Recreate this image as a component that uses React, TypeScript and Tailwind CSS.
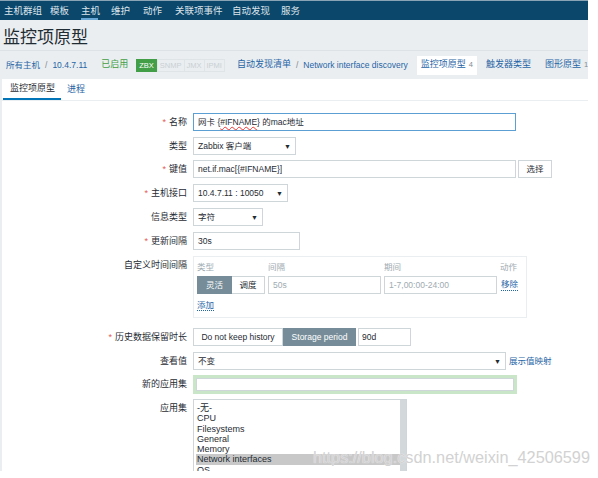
import React from "react";

const F = { fontFamily: '"Liberation Sans", "Noto Sans CJK SC", sans-serif' };

function Arrow() {
  return <span className="text-[7px] text-[#1f2c33] leading-none">▼</span>;
}

function Label({ req, children }: { req?: boolean; children: React.ReactNode }) {
  return (
    <div className="w-[191px] shrink-0 pr-[6px] text-right text-[9px] text-[#1f2c33] leading-[18px] whitespace-nowrap">
      {req && <span className="text-[#e45959] mr-[3px]">*</span>}
      {children}
    </div>
  );
}

export default function App() {
  const nav = ["主机群组", "模板", "主机", "维护", "动作", "关联项事件", "自动发现", "服务"];
  const navX = ["w-[46px]", "w-[31px]", "w-[30px]", "w-[32px]", "w-[32px]", "w-[57px]", "w-[49px]", "w-[30px]"];
  return (
    <div className="w-[598px] h-[478px] bg-white overflow-hidden relative" style={F}>
      <div className="w-[588px] h-[471px] bg-[#ebeef0] overflow-hidden flex flex-col">
        {/* top nav */}
        <div className="h-[20px] bg-[#0b466b] border-t border-[#8aa4b5] flex items-stretch pl-[4px] shrink-0">
          {nav.map((n, i) => (
            <div key={n} className={`${navX[i]} shrink-0 relative text-[9.5px] text-[#dbe4ea] leading-[19px] whitespace-nowrap`}>
              {n}
              {i === 2 && <div className="absolute left-0 w-[17px] bottom-0 h-[2px] bg-[#69a8d6]" />}
            </div>
          ))}
        </div>
        {/* title */}
        <div className="h-[31px] border-b border-[#dde2e6] flex items-center pl-[3px] shrink-0">
          <span className="text-[17px] text-[#1f2c33] leading-none mt-[4px]">监控项原型</span>
        </div>
        {/* breadcrumb */}
        <div className="h-[28px] flex items-center pl-[6px] text-[8.5px] shrink-0 whitespace-nowrap">
          <span className="text-[#1f65a6]">所有主机</span>
          <span className="text-[#7f8c93] mx-[5px]">/</span>
          <span className="text-[#1f65a6]">10.4.7.11</span>
          <span className="text-[#429e47] ml-[14px] text-[9px]">已启用</span>
          <div className="flex ml-[8px] text-[7.5px] leading-[11px]">
            <span className="bg-[#429e47] text-white px-[2px] border border-[#429e47]">ZBX</span>
            <span className="text-[#c8d0d4] border border-[#dfe4e7] px-[2px]">SNMP</span>
            <span className="text-[#c8d0d4] border border-[#dfe4e7] border-l-0 px-[2px]">JMX</span>
            <span className="text-[#c8d0d4] border border-[#dfe4e7] border-l-0 px-[2px]">IPMI</span>
          </div>
          <span className="text-[#1f65a6] ml-[12px] text-[9px]">自动发现清单</span>
          <span className="text-[#7f8c93] mx-[5px]">/</span>
          <span className="text-[#1f65a6]">Network interface discovery</span>
          <div className="ml-[9px] bg-white h-[19px] flex items-center px-[4px]">
            <span className="text-[#1f65a6] text-[9px]">监控项原型</span>
            <span className="text-[#7f8c93] text-[7.5px] ml-[3px]">4</span>
          </div>
          <span className="text-[#1f65a6] ml-[9px] text-[9px]">触发器类型</span>
          <span className="text-[#1f65a6] ml-[14px] text-[9px]">图形原型</span>
          <span className="text-[#7f8c93] text-[7.5px] ml-[3px]">1</span>
        </div>
        {/* tabs */}
        <div className="h-[22px] bg-white flex items-stretch ml-[2px] border-b border-[#ebeef0] shrink-0">
          <div className="w-[58px] ml-[1px] border-b-2 border-[#0275b8] text-[9px] text-[#1f2c33] flex items-center pl-[7px] whitespace-nowrap">监控项原型</div>
          <div className="text-[9px] text-[#1f65a6] flex items-center ml-[6px]">进程</div>
        </div>
        {/* form */}
        <div className="flex-1 bg-white ml-[2px] pt-[12px] flex flex-col text-[8.5px] text-[#1f2c33] whitespace-nowrap">
          {/* 名称 */}
          <div className="flex h-[18px]">
            <Label req>名称</Label>
            <div className="w-[323px] h-[18px] border border-[#5b9fd3] flex items-center px-[4px]">
              网卡 {"{"}<span className="underline decoration-[#e33] decoration-wavy">#IFNAME</span>{"}"} 的mac地址
            </div>
          </div>
          <div className="flex h-[18px] mt-[6px]">
            <Label>类型</Label>
            <div className="w-[103px] h-[18px] border border-[#cfd6da] flex items-center justify-between px-[4px]">
              <span>Zabbix 客户端</span>
              <Arrow />
            </div>
          </div>
          <div className="flex h-[18px] mt-[5px]">
            <Label req>键值</Label>
            <div className="w-[323px] h-[18px] border border-[#cfd6da] flex items-center px-[4px]">net.if.mac[{"{"}#IFNAME{"}"}]</div>
            <div className="ml-[2px] w-[34px] h-[18px] border border-[#cfd6da] flex items-center justify-center text-[8.5px]">选择</div>
          </div>
          <div className="flex h-[18px] mt-[6px]">
            <Label req>主机接口</Label>
            <div className="w-[95px] h-[18px] border border-[#cfd6da] flex items-center justify-between px-[4px]">
              <span>10.4.7.11 : 10050</span>
              <Arrow />
            </div>
          </div>
          <div className="flex h-[18px] mt-[6px]">
            <Label>信息类型</Label>
            <div className="w-[70px] h-[18px] border border-[#cfd6da] flex items-center justify-between px-[4px]">
              <span>字符</span>
              <Arrow />
            </div>
          </div>
          <div className="flex h-[18px] mt-[6px]">
            <Label req>更新间隔</Label>
            <div className="w-[107px] h-[18px] border border-[#cfd6da] flex items-center px-[4px]">30s</div>
          </div>
          {/* custom intervals */}
          <div className="flex mt-[6px]">
            <Label>自定义时间间隔</Label>
            <div className="w-[334px] h-[62px] border border-[#ebeef0] px-[3px] pt-[4px] flex flex-col">
              <div className="flex h-[12px] text-[8.5px] text-[#a0abb1] leading-[12px]">
                <span className="w-[71px]">类型</span>
                <span className="w-[116px]">间隔</span>
                <span className="w-[116px]">期间</span>
                <span>动作</span>
              </div>
              <div className="flex h-[18px] mt-[3px] items-center">
                <div className="flex h-[18px] w-[68px]">
                  <div className="w-[35px] bg-[#768d99] text-white flex items-center justify-center text-[8.5px]">灵活</div>
                  <div className="w-[33px] border border-[#cfd6da] border-l-0 flex items-center justify-center text-[8.5px]">调度</div>
                </div>
                <div className="ml-[3px] w-[113px] h-[18px] border border-[#cfd6da] flex items-center px-[4px] text-[#a0abb1] text-[8.5px]">50s</div>
                <div className="ml-[3px] w-[113px] h-[18px] border border-[#cfd6da] flex items-center px-[4px] text-[#a0abb1] text-[8.5px]">1-7,00:00-24:00</div>
                <span className="ml-[4px] text-[#1f65a6] border-b border-dotted border-[#1f65a6] leading-[11px] text-[8.5px]">移除</span>
              </div>
              <div className="mt-[5px]">
                <span className="text-[#1f65a6] border-b border-dotted border-[#1f65a6] leading-[11px] text-[8.5px]">添加</span>
              </div>
            </div>
          </div>
          <div className="flex h-[18px] mt-[10px]">
            <Label req>历史数据保留时长</Label>
            <div className="flex h-[18px]">
              <div className="w-[90px] border border-[#cfd6da] flex items-center justify-center">Do not keep history</div>
              <div className="w-[73px] bg-[#768d99] text-white flex items-center justify-center">Storage period</div>
            </div>
            <div className="ml-[2px] w-[53px] h-[18px] border border-[#cfd6da] flex items-center px-[3px]">90d</div>
          </div>
          <div className="flex h-[18px] mt-[6px] items-center">
            <Label>查看值</Label>
            <div className="w-[313px] h-[18px] border border-[#cfd6da] flex items-center justify-between px-[4px]">
              <span>不变</span>
              <Arrow />
            </div>
            <span className="ml-[3px] text-[#1f65a6] text-[8.5px]">展示值映射</span>
          </div>
          <div className="flex h-[19px] mt-[5px]">
            <Label>新的应用集</Label>
            <div className="w-[324px] h-[19px] border-[3px] border-[#c9e6c9] bg-white">
              <div className="w-full h-full border border-[#cfd6da]" />
            </div>
          </div>
          <div className="flex mt-[5px]">
            <Label>应用集</Label>
            <div className="w-[214px] h-[80px] border border-[#cfd6da] flex">
              <div className="flex-1 pt-[3px] pl-[2px] text-[9px] leading-[10.3px] text-[#1f2c33]">
                <div className="pl-[1px]">-无-</div>
                <div className="pl-[1px]">CPU</div>
                <div className="pl-[1px]">Filesystems</div>
                <div className="pl-[1px]">General</div>
                <div className="pl-[1px]">Memory</div>
                <div className="pl-[1px] bg-[#c8c8c8]">Network interfaces</div>
                <div className="pl-[1px]">OS</div>
              </div>
              <div className="w-[6px] bg-[#d3d8db]" />
            </div>
          </div>
        </div>
      </div>
      <div className="absolute left-[313px] top-[449px] text-[16.3px] text-[#d2d2d2] leading-none whitespace-nowrap" style={{ fontFamily: '"Liberation Sans", sans-serif', textShadow: "0 0 1px #fff" }}>
        https://blog.csdn.net/weixin_42506599
      </div>
    </div>
  );
}
